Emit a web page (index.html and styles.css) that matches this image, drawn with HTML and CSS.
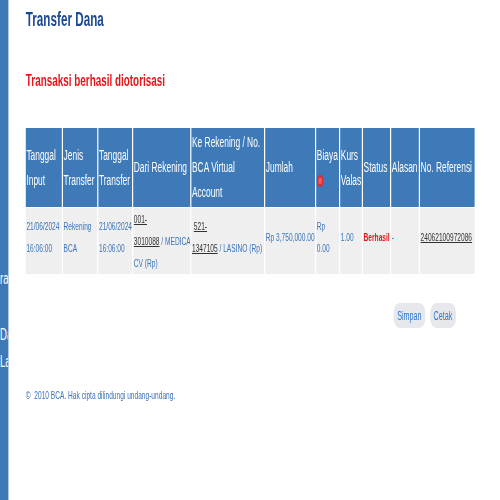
FILE: index.html
```html
<!DOCTYPE html>
<html lang="id">
<head>
<meta charset="utf-8">
<title>Transfer Dana</title>
<link rel="stylesheet" href="styles.css">
</head>
<body>
<div class="page">
  <nav class="sidebar">
    <div class="menu-item first">ra</div>
    <div class="menu-item second">Da</div>
    <div class="menu-item">La</div>
  </nav>
  <main class="main">
    <h1 class="title">Transfer Dana</h1>
    <h2 class="notice">Transaksi berhasil diotorisasi</h2>
    <table class="grid">
      <thead>
        <tr>
          <th class="c1">Tanggal<br>Input</th>
          <th class="c2">Jenis<br>Transfer</th>
          <th class="c3">Tanggal<br>Transfer</th>
          <th class="c4">Dari Rekening</th>
          <th class="c5">Ke Rekening / No.<br>BCA Virtual<br>Account</th>
          <th class="c6">Jumlah</th>
          <th class="c7">Biaya<br><span class="info"><svg width="11" height="12" viewBox="0 0 10 11"><ellipse cx="5" cy="5.5" rx="5" ry="5.5" fill="#df262c"/><ellipse cx="5" cy="5.5" rx="3" ry="3.5" fill="#ea5a5e"/></svg></span></th>
          <th class="c8">Kurs<br>Valas</th>
          <th class="c9">Status</th>
          <th class="c10">Alasan</th>
          <th class="c11">No. Referensi</th>
        </tr>
      </thead>
      <tbody>
        <tr>
          <td>21/06/2024<br>16:06:00</td>
          <td>Rekening<br>BCA</td>
          <td>21/06/2024<br>16:06:00</td>
          <td class="tall"><a class="acct" href="#">001-<br>3010088</a> / MEDICA<br>CV (Rp)</td>
          <td>&nbsp;<a class="acct" href="#">521-<br>1347105</a> / LASINO (Rp)</td>
          <td>Rp 3,750,000.00</td>
          <td>Rp<br>0.00</td>
          <td>1.00</td>
          <td><span class="ok">Berhasil</span></td>
          <td>-</td>
          <td><a class="acct" href="#">24062100972086</a></td>
        </tr>
      </tbody>
    </table>
    <div class="actions">
      <button class="btn" type="button">Simpan</button>
      <button class="btn" type="button">Cetak</button>
    </div>
    <footer class="footer">©&nbsp; 2010 BCA. Hak cipta dilindungi undang-undang.</footer>
  </main>
</div>
</body>
</html>
```
FILE: styles.css
```css
html, body {
  margin: 0;
  padding: 0;
  overflow: hidden;
  background: #ffffff;
}

body {
  font-family: "Liberation Sans", Arial, sans-serif;
}

.page {
  width: 834px;
  min-height: 500px;
  display: flex;
  transform: scaleX(0.6);
  transform-origin: 0 0;
}

.sidebar {
  width: 14px;
  flex: none;
  background: #3f78b6;
  overflow: hidden;
  padding-top: 269px;
  box-sizing: border-box;
}

.menu-item {
  color: #ffffff;
  font-size: 16px;
  line-height: 20px;
  white-space: nowrap;
}

.menu-item.first {
  margin-bottom: 36px;
}

.menu-item.second {
  margin-bottom: 7px;
}

.main {
  flex: 1;
  padding: 8px 0 0 29px;
}

.title {
  margin: 0;
  font-size: 19.5px;
  line-height: 22px;
  font-weight: bold;
  color: #1c4791;
}

.notice {
  margin: 40px 0 0;
  font-size: 16.5px;
  line-height: 20px;
  font-weight: bold;
  color: #e3161c;
}

.grid {
  margin-top: 37px;
  margin-left: -2px;
  border-collapse: separate;
  border-spacing: 2px 1px;
  table-layout: fixed;
  width: 752px;
}

.grid th {
  background: #3e79b8;
  color: #ffffff;
  font-weight: normal;
  font-size: 14px;
  line-height: 25px;
  text-align: left;
  vertical-align: middle;
  padding: 2px 0 2px 1px;
  white-space: nowrap;
  overflow: hidden;
}

.grid td {
  background: #efefef;
  color: #3a75bb;
  font-size: 11px;
  line-height: 22px;
  text-align: left;
  vertical-align: middle;
  padding: 0 0 8px 1px;
  white-space: nowrap;
  overflow: hidden;
}

.grid td.tall {
  padding-bottom: 0;
}

.c1 { width: 59px; }
.c2 { width: 56px; }
.c3 { width: 55px; }
.c4 { width: 94px; }
.c5 { width: 120px; }
.c6 { width: 82px; }
.c7 { width: 37px; }
.c8 { width: 35px; }
.c9 { width: 44px; }
.c10 { width: 45px; }
.c11 { width: 90px; }

.info {
  display: inline-block;
  vertical-align: middle;
  line-height: 0;
}

.acct {
  color: #333333;
  text-decoration: underline;
}

.ok {
  color: #e3161c;
  font-weight: bold;
}

.actions {
  width: 717px;
  margin-top: 28px;
  display: flex;
  justify-content: flex-end;
  gap: 8px;
}

.btn {
  font-family: "Liberation Sans", Arial, sans-serif;
  font-size: 12px;
  color: #2f76cf;
  background: #e7e8ec;
  border: none;
  border-radius: 10px;
  height: 25px;
  padding: 0 6px;
}

.footer {
  margin-top: 60px;
  font-size: 11px;
  line-height: 14px;
  color: #3a72b5;
}
```
